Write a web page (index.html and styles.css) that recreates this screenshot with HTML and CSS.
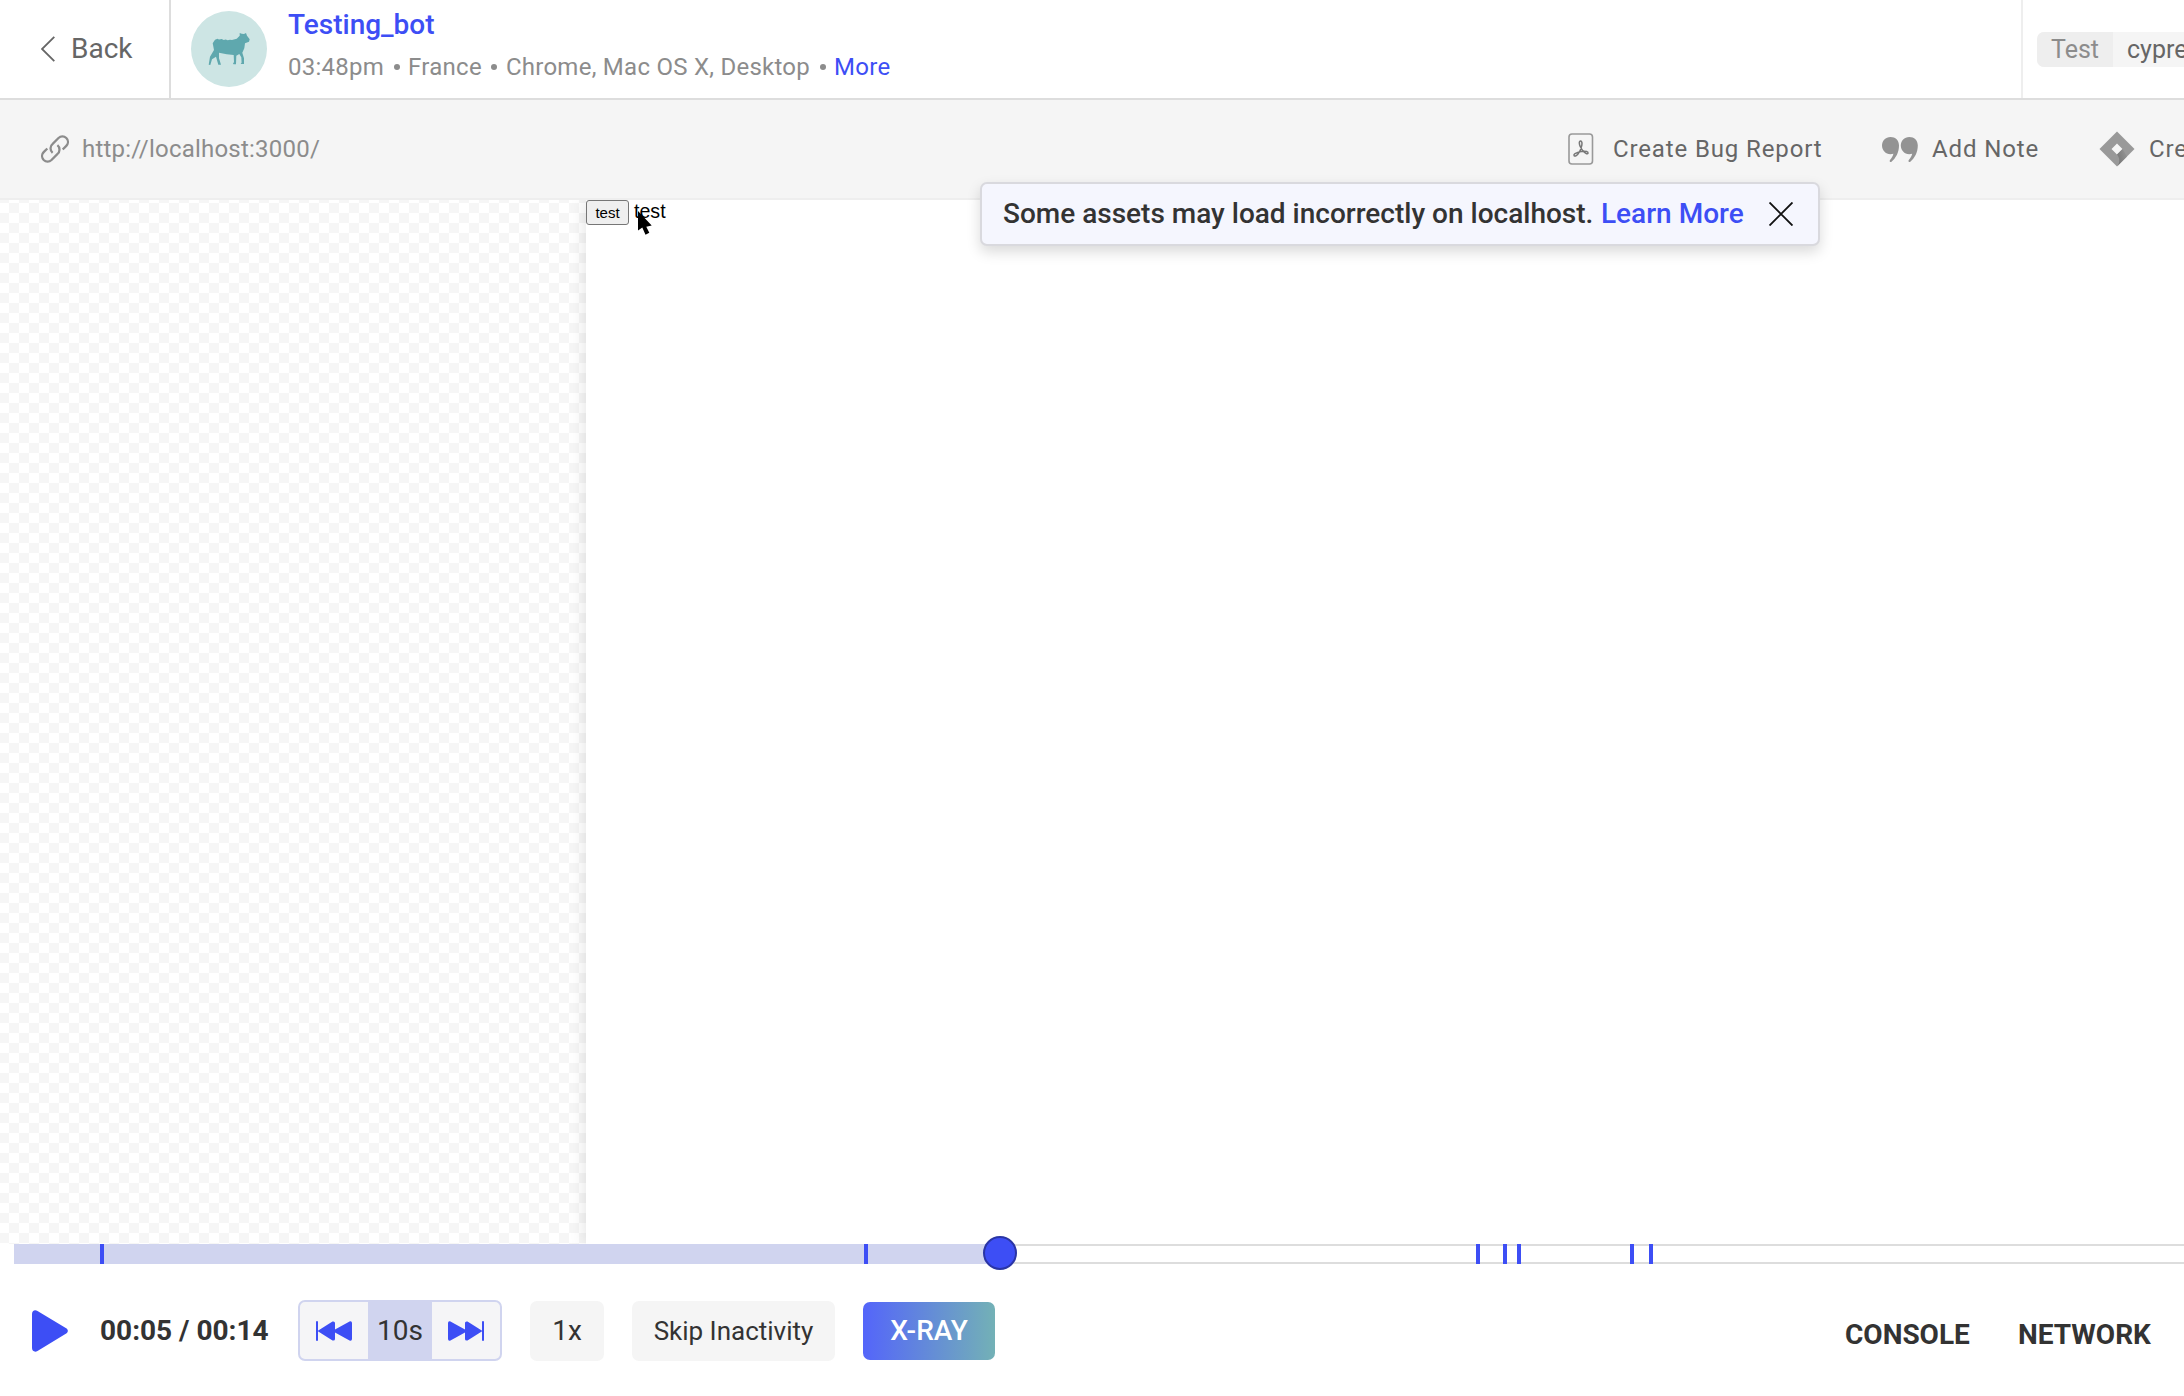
FILE: index.html
```html
<!DOCTYPE html>
<html lang="en">
<head>
<meta charset="utf-8">
<title>Session replay</title>
<link rel="stylesheet" href="styles.css">
</head>
<body>
<div class="app">
  <header class="header">
    <a class="back"><svg width="14" height="26" viewBox="0 0 14 26"><path d="M13.3.8 1 13l12.3 12.2" fill="none" stroke="#666" stroke-width="1.8"/></svg><span>Back</span></a>
    <div class="user">
      <div class="avatar">
        <svg width="76" height="76" viewBox="0 0 76 76"><path fill="#5fa8ae" d="M48.700 22l2 .8 2.300.1 2-.9 1 2.700 2.700 3.600-.7 2.400-4 1.600-.7 5-2 4.400 1.700 5.600v5.700h-3.300l.9-1.500-.3-5.200-2-3.300-3 1.700-.3 8.600h-2.500l-.5-1 1-1 -.3-7.300-7-.7-7.700-1.600v5.600l2 6.400h-2.700L25 45.700l-4 2.600-1.700 5.700-1.600-.3 1.300-8L23 39l-1.300-6.700L24 28.700l2.500-1 1.500.8 2.700-.4 2 .9 2-.6 2 .8 2.300-.5 2 .2 4.700-1.200 3-3z"/></svg>
      </div>
      <div class="user-text">
        <div class="user-name">Testing_bot</div>
        <div class="user-meta"><span>03:48pm</span><i class="dot"></i><span>France</span><i class="dot"></i><span>Chrome, Mac OS X, Desktop</span><i class="dot"></i><a class="more">More</a></div>
      </div>
    </div>
    <div class="tags"><div class="tag"><span class="tag-key">Test</span><span class="tag-value">cypress</span></div></div>
  </header>

  <nav class="toolbar">
    <div class="url">
      <svg width="28" height="28" viewBox="0 0 28 28" fill="none" stroke="#8c8c8c" stroke-width="2.300"><path d="M11.600 17.800a5.800 5.800 0 0 1 .1-9l5.800-5.800a5.700 5.700 0 0 1 7.800 0 5.700 5.700 0 0 1 0 7.900l-3.600 3.600"/><path d="M16.400 10.200a5.800 5.800 0 0 1-.1 9L10.500 25a5.700 5.700 0 0 1-7.800 0 5.700 5.700 0 0 1 0-7.900l3.600-3.600"/></svg>
      <span>http://localhost:3000/</span>
    </div>
    <a class="action bug"><svg width="26" height="32" viewBox="0 0 26 32" fill="none"><rect x="1" y="1" width="23.500" height="30" rx="3" stroke="#999" stroke-width="1.600"/><path d="M12.600 8c-1.800 0-1.500 3.200-.2 5.800 1.500 3.200 3.700 6 6.200 7 1.600.4 2-1.700.3-2.200-3.300-.8-8.800.4-11.900 2-1.800 1.100-1 3.200.9 2.200 2.500-1.500 5-6.500 5.900-10.500.4-2.200.2-4.300-1.200-4.300z" stroke="#777" stroke-width="1.500"/></svg><span>Create Bug Report</span></a>
    <a class="action note"><svg width="36" height="25" viewBox="0 0 36 29" preserveAspectRatio="none" fill="#939393"><path id="quote" d="M8.500 0C13.500 0 17 3.800 17 10c0 8-3.200 14.800-7.500 18.700-1.200.9-2.400-.6-1.500-1.900 1.700-2.500 2.800-4.500 3.400-7.300Q10 20 8.500 20C3.500 20 0 15.500 0 10S3.500 0 8.500 0z"/><use href="#quote" x="18.800"/></svg><span>Add Note</span></a>
    <a class="action ticket"><svg width="36" height="36" viewBox="0 0 36 36"><defs><linearGradient id="fold" x1="1" y1="0" x2="0" y2=".6"><stop offset="0" stop-color="#999"/><stop offset="1" stop-color="#777"/></linearGradient></defs><path fill="#999" fill-rule="evenodd" d="M18 .5 35.500 18 18 35.500.5 18zM18 12.500 12.500 18l5.500 5.500 5.500-5.500z"/><path fill="url(#fold)" d="M23.500 18 18 23.500c2.600 2.800 3.300 7.500.5 11.600L28 25.500z"/></svg><span>Create Ticket</span></a>
  </nav>

  <main class="stage">
    <div class="replay">
      <button class="page-button">test</button><span class="page-text">test</span>
      <svg class="cursor" width="14" height="24" viewBox="0 0 14 24"><path d="M0 0v19.500l4.300-3 3.200 7.200 3.800-2-3-5.900 5.400-1.300z"/></svg>
    </div>
    <div class="notice"><span class="notice-text">Some assets may load incorrectly on localhost.</span><a class="learn">Learn More</a><svg width="24" height="24" viewBox="0 0 24 24"><path d="M.5.5l23 23M23.500.5l-23 23" stroke="#111" stroke-width="1.900"/></svg></div>
  </main>

  <footer class="player">
    <div class="timeline">
      <div class="played"></div>
      <i class="mark" style="left:86px"></i><i class="mark" style="left:850px"></i><i class="mark" style="left:1462px"></i><i class="mark" style="left:1489px"></i><i class="mark" style="left:1503px"></i><i class="mark" style="left:1616px"></i><i class="mark" style="left:1635px"></i>
      <div class="thumb"></div>
    </div>
    <div class="controls">
      <svg class="play" width="36" height="42" viewBox="0 0 36 42"><path fill="#3d4ef5" d="M0 4C0 .8 2.800-.6 5.500 1l28.700 17.200c2.200 1.300 2.200 4 0 5.400L5.500 41C2.800 42.600 0 41 0 38z"/></svg>
      <span class="time">00:05 / 00:14</span>
      <div class="skip">
        <span class="skip-side"><svg width="36" height="20" viewBox="0 0 36 20"><g id="step" fill="#3d4ef5"><rect width="2" height="20" rx="1"/><path d="M1.500 10 16.500.5Q19 0 19 2v6.500L34 .3Q36 0 36 2v16q0 2-2 1.700L19 11.500V18q0 2-2.500 1.500z"/></g></svg></span>
        <span class="skip-amount">10s</span>
        <span class="skip-side"><svg width="36" height="20" viewBox="0 0 36 20"><use href="#step" transform="matrix(-1 0 0 1 36 0)"/></svg></span>
      </div>
      <span class="btn speed">1x</span>
      <span class="btn inactivity">Skip Inactivity</span>
      <span class="btn xray">X-RAY</span>
      <div class="panels"><span class="console">CONSOLE</span><span class="network">NETWORK</span></div>
    </div>
  </footer>
</div>
</body>
</html>
```
FILE: styles.css
```css
* { box-sizing: border-box; }
body { margin: 0; overflow: hidden; background: #fff; font-family: Roboto, sans-serif; color: #333; }
svg { display: block; flex: none; }
span, a { white-space: nowrap; }
.app { display: flex; flex-direction: column; width: 2184px; height: 1396px; overflow: hidden; }

.header { display: flex; flex: none; height: 100px; border-bottom: 2px solid #ddd; }
.back { display: flex; flex: none; align-items: center; width: 171px; padding-left: 41px; gap: 16px; border-right: 2px solid #ddd; font-size: 28px; color: #666; }
.back span { margin-bottom: 2px; }
.user { display: flex; flex: 1; padding-left: 20px; }
.avatar { flex: none; width: 76px; height: 76px; margin-top: 11px; border-radius: 50%; background: #cde5e4; }
.user-text { margin-left: 21px; }
.user-name { margin-top: 8px; font-size: 28px; line-height: 34px; font-weight: 500; color: #3d4ef5; }
.user-meta { display: flex; align-items: center; margin-top: 9px; font-size: 24px; line-height: 32px; letter-spacing: .26px; color: #8c8c8c; }
.dot { width: 6px; height: 6px; margin: 0 8.500px 0 9.500px; border-radius: 50%; background: #8c8c8c; }
.more, .learn { color: #3d4ef5; }
.tags { flex: none; width: 163px; border-left: 2px solid #eee; padding: 32px 0 0 14px; overflow: hidden; }
.tag { display: flex; width: 220px; height: 35px; border-radius: 7px; overflow: hidden; background: #f5f5f5; font-size: 25px; line-height: 35px; color: #666; }
.tag-key { width: 76px; padding-left: 14px; background: #eee; color: #8c8c8c; }
.tag-value { padding-left: 14px; }

.toolbar { display: flex; flex: none; align-items: center; height: 100px; border-bottom: 2px solid #eee; background: #f5f5f5; font-size: 24px; color: #666; overflow: hidden; }
.url { display: flex; flex: none; align-items: center; width: 1568px; padding-left: 41px; gap: 13px; letter-spacing: .22px; color: #8c8c8c; }
.action { display: flex; flex: none; align-items: center; letter-spacing: .87px; }
.bug { width: 314px; gap: 19px; }
.note { width: 217px; gap: 14px; }
.ticket { gap: 14px; }

.stage { position: relative; flex: none; height: 1044px; padding-left: 586px; background: conic-gradient(#f6f6f6 25%, #fff 0 50%, #f6f6f6 0 75%, #fff 0) -11px -7px / 20px 20px; }
.replay { position: relative; display: flex; align-items: flex-start; height: 1044px; background: #fff; box-shadow: 0 0 16px rgba(0, 0, 0, .13); font-family: "Liberation Sans", Arial, sans-serif; color: #000; clip-path: inset(0 0 0 -30px); }
.page-button { width: 43px; height: 25px; margin: 0 5px 0 0; padding: 0; border: 1px solid #767676; border-radius: 3px; background: #efefef; font: 15px "Liberation Sans", Arial, sans-serif; color: #000; }
.page-text { margin-top: 1px; font-size: 19.600px; line-height: 21px; }
.cursor { position: absolute; left: 52px; top: 11px; }
.notice { position: absolute; left: 980px; top: -18px; display: flex; align-items: center; width: 840px; height: 64px; padding-left: 21px; border: 2px solid #d9d9de; border-radius: 7px; background: #f5f6fe; box-shadow: 0 6px 14px rgba(0, 0, 0, .15); font-size: 28px; font-weight: 500; }
.notice-text { width: 598px; margin-bottom: 2px; }
.learn { width: 168px; margin-bottom: 2px; }

.player { position: relative; z-index: 1; display: flex; flex: 1; flex-direction: column; background: #fff; }
.timeline { position: relative; flex: none; height: 20px; margin: 0 -2px 0 14px; border: solid #ddd; border-width: 2px 0; background: #fff; }
.played { width: 986px; height: 20px; margin-top: -2px; background: #d0d4ef; }
.mark { position: absolute; top: -2px; width: 4px; height: 20px; background: #3d4ef5; }
.thumb { position: absolute; left: 969px; top: -10px; width: 34px; height: 34px; border: 2px solid #2a35a5; border-radius: 50%; background: #3d4ef5; }
.controls { display: flex; align-items: center; height: 134px; padding: 0 0 1px 32px; font-size: 28px; }
.play { margin-right: 32px; }
.time { width: 198px; font-weight: 700; }
.skip { display: flex; flex: none; width: 204px; height: 61px; border: 2px solid #d0d4ef; border-radius: 7px; overflow: hidden; background: #f5f5f7; }
.skip-side { display: grid; width: 68px; place-items: center; }
.skip-amount { display: grid; width: 64px; place-items: center; background: #d0d4ef; }
.btn { display: grid; flex: none; place-items: center; height: 60px; border-radius: 7px; background: #f5f5f5; }
.speed { width: 74px; margin-left: 28px; }
.inactivity { width: 203px; margin-left: 28px; font-size: 26px; }
.xray { width: 132px; height: 58px; margin-left: 28px; background: linear-gradient(90deg, #5465fa, #73b1b6); color: #fff; font-weight: 500; }
.panels { display: flex; margin: 7px 0 0 850px; font-weight: 700; }
.console { width: 173px; }
```
